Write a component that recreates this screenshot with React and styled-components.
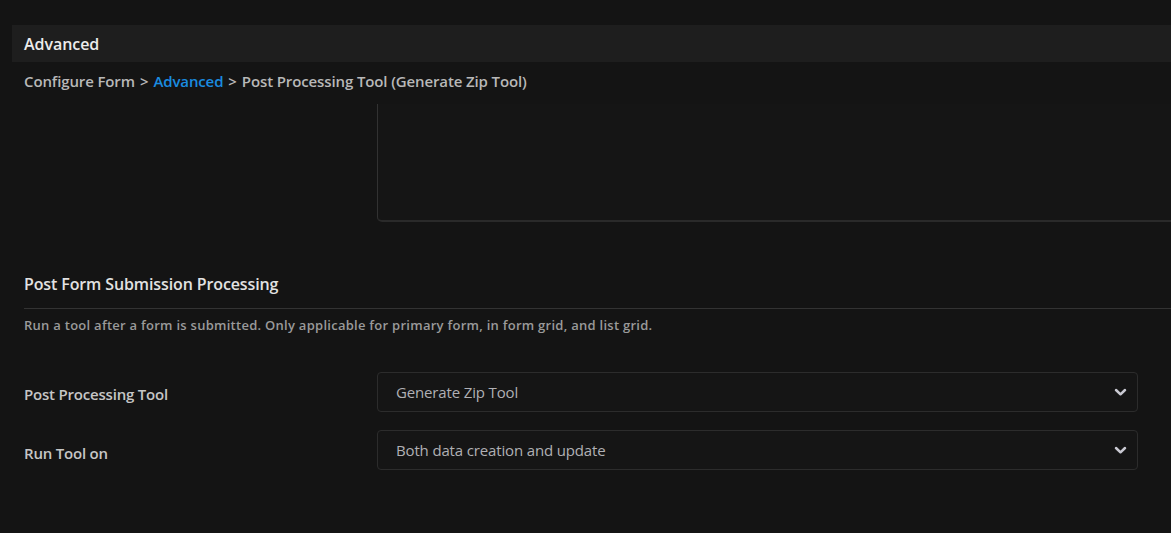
import React from "react";
import styled, { createGlobalStyle } from "styled-components";

const Global = createGlobalStyle`
  html, body { margin: 0; padding: 0; background: #141414; overflow: hidden; }
  body { font-family: "Open Sans", "Noto Sans", sans-serif; }
  * { box-sizing: border-box; }
`;

const Page = styled.div`
  width: 1171px;
  height: 533px;
  background: #141414;
  padding-top: 25px;
  overflow: hidden;
`;

const HeaderBar = styled.div`
  margin-left: 12px;
  height: 37px;
  background: #1e1e1e;
  display: flex;
  align-items: center;
  padding-left: 12px;
  color: #ececec;
  font-size: 16px;
  font-weight: 600;
  letter-spacing: -0.05px;
`;

const Breadcrumb = styled.div`
  padding-left: 24px;
  height: 38px;
  display: flex;
  align-items: center;
  font-size: 15px;
  font-weight: 600;
  color: #b8b8b8;
  letter-spacing: -0.12px;
  gap: 5px;
`;

const Crumb = styled.span`
  color: ${(p) => (p.$active ? "#1a8ce0" : "#b8b8b8")};
`;

const Scroller = styled.div`
  display: flex;
  flex-direction: column;
`;

const TextBoxRow = styled.div`
  padding-left: 377px;
  height: 118px;
  margin-top: 4px;
`;

const TextBox = styled.div`
  width: 900px;
  height: 100%;
  border-left: 1px solid #323232;
  border-bottom: 2px solid #2a2a2a;
  border-bottom-left-radius: 5px;
  background: #151515;
`;

const Section = styled.div`
  padding-left: 24px;
  margin-top: 49px;
`;

const SectionTitle = styled.div`
  font-size: 16px;
  font-weight: 600;
  color: #e2e2e2;
  letter-spacing: -0.12px;
  height: 26px;
  line-height: 26px;
`;

const Rule = styled.div`
  height: 1px;
  background: #333;
  margin-top: 11px;
`;

const Description = styled.div`
  margin-top: 7px;
  font-size: 13px;
  font-weight: 600;
  color: #9a9a9a;
  letter-spacing: 0.27px;
  line-height: 18px;
`;

const FormRows = styled.div`
  margin-top: 38px;
  display: flex;
  flex-direction: column;
  gap: 18px;
  padding-right: 33px;
`;

const Row = styled.div`
  display: grid;
  grid-template-columns: 353px 1fr;
  align-items: center;
`;

const Label = styled.div`
  font-size: 15px;
  font-weight: 600;
  color: #c6c6c6;
  letter-spacing: -0.2px;
  padding-top: ${(p) => p.$offset || 0}px;
`;

const Select = styled.div`
  height: 40px;
  border: 1px solid #2c2c2c;
  border-radius: 4px;
  background: #151515;
  display: flex;
  align-items: center;
  justify-content: space-between;
  padding: 0 10px 0 18px;
  font-size: 15px;
  color: #b0b0b4;
  letter-spacing: -0.15px;
`;

const Chevron = () => (
  <svg width="13" height="10" viewBox="0 0 13 10" aria-hidden="true">
    <polyline
      points="2,3 6.5,7.3 11,3"
      fill="none"
      stroke="#c9c9d2"
      strokeWidth="2.5"
      strokeLinecap="round"
      strokeLinejoin="round"
    />
  </svg>
);

const rows = [
  { label: "Post Processing Tool", value: "Generate Zip Tool", offset: 4 },
  { label: "Run Tool on", value: "Both data creation and update", offset: 6 },
];

export default function App() {
  return (
    <Page>
      <Global />
      <HeaderBar>Advanced</HeaderBar>
      <Breadcrumb>
        <Crumb>Configure Form</Crumb>
        <Crumb>&gt;</Crumb>
        <Crumb $active>Advanced</Crumb>
        <Crumb>&gt;</Crumb>
        <Crumb>Post Processing Tool (Generate Zip Tool)</Crumb>
      </Breadcrumb>
      <Scroller>
        <TextBoxRow>
          <TextBox />
        </TextBoxRow>
        <Section>
          <SectionTitle>Post Form Submission Processing</SectionTitle>
          <Rule />
          <Description>
            Run a tool after a form is submitted. Only applicable for primary form, in form grid, and list grid.
          </Description>
          <FormRows>
            {rows.map((r) => (
              <Row key={r.label}>
                <Label $offset={r.offset}>{r.label}</Label>
                <Select>
                  <span>{r.value}</span>
                  <Chevron />
                </Select>
              </Row>
            ))}
          </FormRows>
        </Section>
      </Scroller>
    </Page>
  );
}
